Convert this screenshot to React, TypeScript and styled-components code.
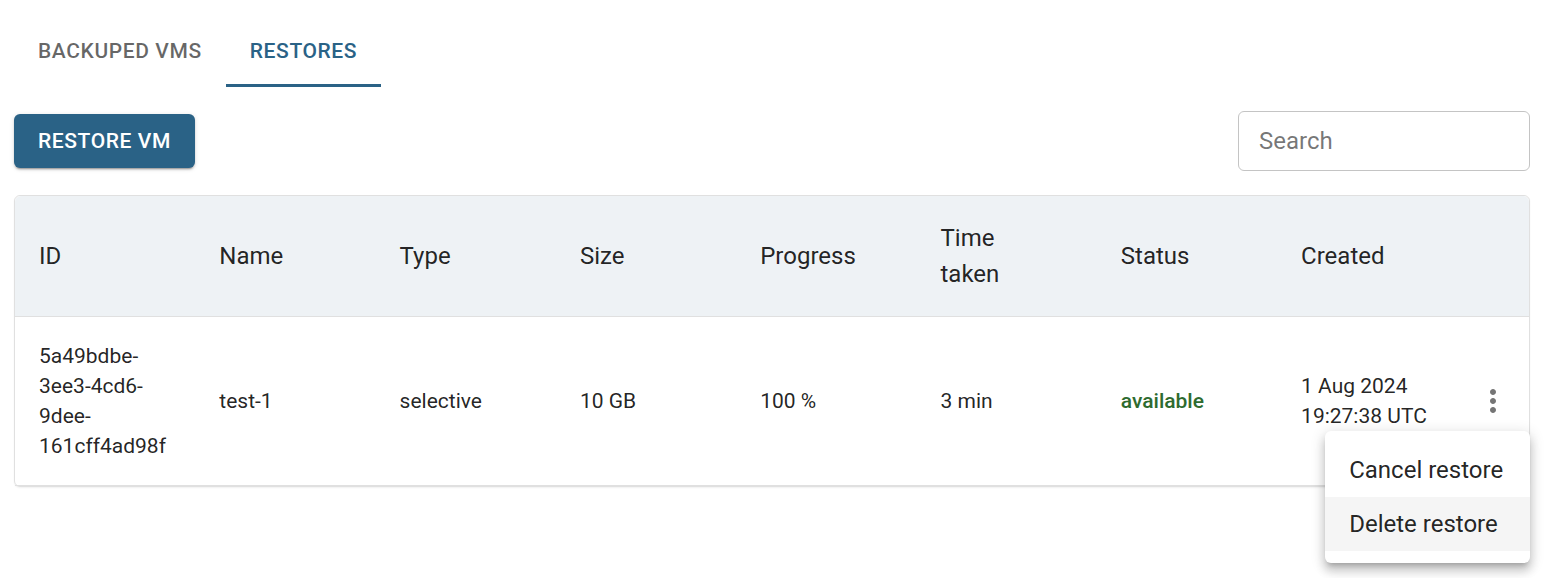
import React from 'react';
import styled, { createGlobalStyle } from 'styled-components';

const GlobalStyle = createGlobalStyle`
  html, body, #root {
    min-height: 100%;
  }
  body {
    margin: 0;
    background: #ffffff;
    font-family: Roboto, "Liberation Sans", Arial, sans-serif;
    color: rgba(0, 0, 0, 0.87);
  }
`;

type Restore = {
  id: string[];
  name: string;
  type: string;
  size: string;
  progress: string;
  timeTaken: string;
  status: string;
  created: string[];
};

const columns = ['ID', 'Name', 'Type', 'Size', 'Progress', 'Time taken', 'Status', 'Created'];

const restores: Restore[] = [
  {
    id: ['5a49bdbe-', '3ee3-4cd6-', '9dee-', '161cff4ad98f'],
    name: 'test-1',
    type: 'selective',
    size: '10 GB',
    progress: '100 %',
    timeTaken: '3 min',
    status: 'available',
    created: ['1 Aug 2024', '19:27:38 UTC'],
  },
];

function Lines({ parts }: { parts: string[] }) {
  return (
    <>
      {parts.map((p, i) => (
        <React.Fragment key={i}>
          {i > 0 && <br />}
          {p}
        </React.Fragment>
      ))}
    </>
  );
}

function MoreIcon() {
  return (
    <svg width="36" height="36" viewBox="0 0 24 24" fill="#757575">
      <path d="M12 8c1.1 0 2-.9 2-2s-.9-2-2-2-2 .9-2 2 .9 2 2 2zm0 2c-1.1 0-2 .9-2 2s.9 2 2 2 2-.9 2-2-.9-2-2-2zm0 6c-1.1 0-2 .9-2 2s.9 2 2 2 2-.9 2-2-.9-2-2-2z" />
    </svg>
  );
}

export default function App() {
  return (
    <Page>
      <GlobalStyle />

      <Tabs>
        <Tab>Backuped VMs</Tab>
        <Tab $active>Restores</Tab>
      </Tabs>

      <Toolbar>
        <PrimaryButton>Restore VM</PrimaryButton>
        <SearchInput placeholder="Search" />
      </Toolbar>

      <TablePaper>
        <Table>
          <colgroup>
            {columns.map((c) => (
              <DataCol key={c} />
            ))}
            <col />
          </colgroup>
          <thead>
            <tr>
              {columns.map((c) => (
                <HeadCell key={c}>
                  <Lines parts={c.split(' ')} />
                </HeadCell>
              ))}
              <HeadCell />
            </tr>
          </thead>
          <tbody>
            {restores.map((r) => (
              <tr key={r.id.join('')}>
                <BodyCell>
                  <Lines parts={r.id} />
                </BodyCell>
                <BodyCell>{r.name}</BodyCell>
                <BodyCell>{r.type}</BodyCell>
                <BodyCell>{r.size}</BodyCell>
                <BodyCell>{r.progress}</BodyCell>
                <BodyCell>{r.timeTaken}</BodyCell>
                <BodyCell>
                  <StatusText>{r.status}</StatusText>
                </BodyCell>
                <BodyCell>
                  <Lines parts={r.created} />
                </BodyCell>
                <ActionCell>
                  <MenuAnchor>
                    <IconButton aria-label="actions">
                      <MoreIcon />
                    </IconButton>
                    <Menu>
                      <MenuItem>Cancel restore</MenuItem>
                      <MenuItem $hover>Delete restore</MenuItem>
                    </Menu>
                  </MenuAnchor>
                </ActionCell>
              </tr>
            ))}
          </tbody>
        </Table>
      </TablePaper>
    </Page>
  );
}

const Page = styled.div`
  min-height: 578px;
  box-sizing: border-box;
  padding: 15px 14px 14px;
  display: flex;
  flex-direction: column;
`;

const Tabs = styled.div`
  display: flex;
  height: 72px;
`;

const Tab = styled.div<{ $active?: boolean }>`
  display: flex;
  align-items: center;
  justify-content: center;
  padding: 2px 24px 0;
  font-size: 21px;
  font-weight: 500;
  letter-spacing: 0.6px;
  text-transform: uppercase;
  color: ${(p) => (p.$active ? '#2a6286' : 'rgba(0, 0, 0, 0.6)')};
  border-bottom: 3px solid ${(p) => (p.$active ? '#2a6286' : 'transparent')};
  box-sizing: border-box;
`;

const Toolbar = styled.div`
  display: flex;
  justify-content: space-between;
  align-items: center;
  margin-top: 24px;
  margin-bottom: 24px;
`;

const PrimaryButton = styled.button`
  height: 54px;
  padding: 0 24px;
  border: none;
  border-radius: 6px;
  background: #2a6286;
  color: #ffffff;
  font-family: inherit;
  font-size: 21px;
  font-weight: 500;
  letter-spacing: 0.6px;
  text-transform: uppercase;
  box-shadow: 0 3px 1px -2px rgba(0, 0, 0, 0.2), 0 2px 2px rgba(0, 0, 0, 0.14), 0 1px 5px rgba(0, 0, 0, 0.12);
`;

const SearchInput = styled.input`
  width: 292px;
  height: 60px;
  box-sizing: border-box;
  padding: 0 20px;
  border: 1px solid #c4c4c4;
  border-radius: 6px;
  font-family: inherit;
  font-size: 24px;
  color: rgba(0, 0, 0, 0.87);
  outline: none;

  &::placeholder {
    color: rgba(0, 0, 0, 0.55);
  }
`;

const TablePaper = styled.div`
  border: 1px solid #e0e0e0;
  border-radius: 6px;
  box-shadow: 0 1px 2px rgba(0, 0, 0, 0.06);
`;

const Table = styled.table`
  width: 100%;
  table-layout: fixed;
  border-collapse: separate;
  border-spacing: 0;
`;

const DataCol = styled.col`
  width: 180.3px;
`;

const HeadCell = styled.th`
  background: #eef2f5;
  text-align: left;
  vertical-align: middle;
  padding: 24px;
  font-size: 24px;
  font-weight: 400;
  line-height: 36px;
  color: rgba(0, 0, 0, 0.87);
  border-bottom: 1px solid #e0e0e0;

  &:first-child {
    border-top-left-radius: 6px;
  }
  &:last-child {
    border-top-right-radius: 6px;
  }
`;

const BodyCell = styled.td`
  padding: 24px;
  font-size: 21px;
  line-height: 30px;
  vertical-align: middle;
  color: rgba(0, 0, 0, 0.87);
  border-bottom: 1px solid #e0e0e0;
`;

const ActionCell = styled(BodyCell)`
  padding: 0;
  text-align: center;
`;

const StatusText = styled.span`
  color: #2e6b2f;
  font-weight: 500;
`;

const MenuAnchor = styled.div`
  position: relative;
  display: inline-block;
`;

const IconButton = styled.button`
  width: 60px;
  height: 60px;
  padding: 12px;
  border: none;
  background: transparent;
  display: flex;
  align-items: center;
  justify-content: center;
  border-radius: 50%;
`;

const Menu = styled.div`
  position: absolute;
  top: 100%;
  right: -7px;
  width: 205px;
  padding: 12px 0;
  background: #ffffff;
  border-radius: 6px;
  box-shadow: 0 5px 5px -3px rgba(0, 0, 0, 0.2), 0 8px 10px 1px rgba(0, 0, 0, 0.14), 0 3px 14px 2px rgba(0, 0, 0, 0.12);
  text-align: left;
  z-index: 10;
`;

const MenuItem = styled.div<{ $hover?: boolean }>`
  height: 54px;
  display: flex;
  align-items: center;
  padding: 0 24px;
  font-size: 24px;
  color: rgba(0, 0, 0, 0.87);
  white-space: nowrap;
  background: ${(p) => (p.$hover ? '#f5f5f5' : 'transparent')};
`;
